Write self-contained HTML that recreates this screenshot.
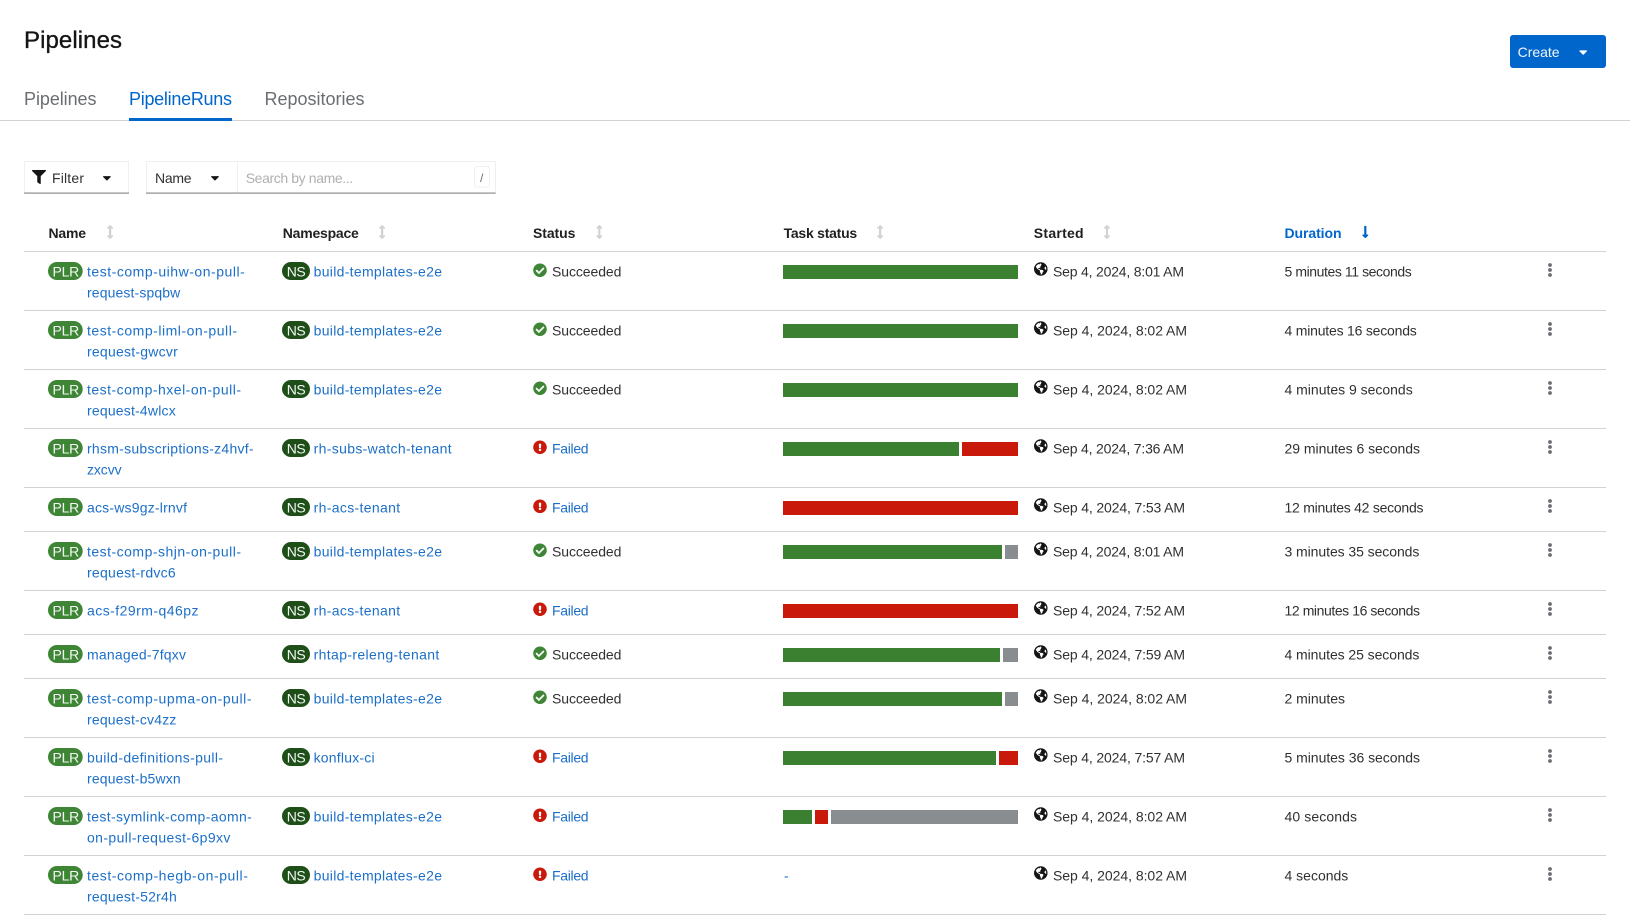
<!DOCTYPE html>
<html lang="en">
<head>
<meta charset="utf-8">
<title>Pipelines</title>
<style>
html,body{margin:0;padding:0;background:#fff;width:1630px;height:923px;overflow:hidden}
svg{display:block;font-family:"Liberation Sans",sans-serif;font-size:14px}
.d{fill:#303030}
.l{fill:#1c6fc9}
.h{font-weight:bold;fill:#1f1f1f}
.w{fill:#f4f8f4}
</style>
</head>
<body>
<svg xmlns="http://www.w3.org/2000/svg" width="1630" height="923" viewBox="0 0 1630 923">
<defs>
<symbol id="ok" viewBox="0 0 512 512"><path fill="#3e8635" d="M504 256c0 136.967-111.033 248-248 248S8 392.967 8 256 119.033 8 256 8s248 111.033 248 248zM227.314 387.314l184-184c6.248-6.248 6.248-16.379 0-22.627l-22.627-22.627c-6.248-6.249-16.379-6.249-22.628 0L216 308.118l-70.059-70.059c-6.248-6.248-16.379-6.248-22.628 0l-22.627 22.627c-6.248 6.248-6.248 16.379 0 22.627l104 104c6.249 6.249 16.379 6.249 22.628.001z"/></symbol>
<symbol id="err" viewBox="0 0 512 512"><path fill="#c9190b" d="M504 256c0 136.997-111.043 248-248 248S8 392.997 8 256C8 119.083 119.043 8 256 8s248 111.083 248 248zm-248 50c-25.405 0-46 20.595-46 46s20.595 46 46 46 46-20.595 46-46-20.595-46-46-46zm-43.673-165.346l7.418 136c.347 6.364 5.609 11.346 11.982 11.346h48.546c6.373 0 11.635-4.982 11.982-11.346l7.418-136c.375-6.874-5.098-12.654-11.982-12.654h-63.383c-6.884 0-12.356 5.78-11.981 12.654z"/></symbol>
<symbol id="globe" viewBox="0 0 496 512"><path fill="#151515" d="M248 8C111.03 8 0 119.03 0 256s111.03 248 248 248 248-111.03 248-248S384.97 8 248 8zm82.29 357.6c-3.9 3.88-7.99 7.95-11.31 11.28-2.99 3-5.1 6.7-6.17 10.71-1.51 5.66-2.73 11.38-4.77 16.87l-17.39 46.85c-13.76 3-28 4.69-42.65 4.69v-27.38c1.69-12.62-7.64-36.26-22.63-51.25-6-6-9.37-14.14-9.37-22.63v-32.01c0-11.64-6.27-22.34-16.46-27.97-14.37-7.95-34.81-19.06-48.81-26.11-11.48-5.78-22.1-13.14-31.65-21.75l-.8-.72a114.792 114.792 0 0 1-18.06-20.74c-9.38-13.77-24.66-36.42-34.59-51.14 20.47-45.5 57.36-82.04 103.2-101.89l24.01 12.01C203.48 89.74 216 82.01 216 70.11v-11.3c7.99-1.29 16.12-2.11 24.39-2.42l28.3 28.3c6.25 6.25 6.25 16.38 0 22.63L264 112l-10.34 10.34c-3.12 3.12-3.12 8.19 0 11.31l4.69 4.69c3.12 3.12 3.12 8.19 0 11.31l-8 8a8.008 8.008 0 0 1-5.66 2.34h-8.99c-2.08 0-4.08.81-5.58 2.27l-9.92 9.65a8.008 8.008 0 0 0-1.58 9.31l15.59 31.19c2.66 5.32-1.21 11.58-7.15 11.58h-5.64c-1.93 0-3.79-.7-5.24-1.96l-9.28-8.06a16.017 16.017 0 0 0-15.55-3.1l-31.17 10.39a11.95 11.95 0 0 0-8.17 11.34c0 4.53 2.56 8.66 6.61 10.69l11.08 5.54c9.41 4.71 19.79 7.16 30.31 7.16s22.59 27.29 32 32h66.75c8.49 0 16.62 3.37 22.63 9.37l13.69 13.69a30.503 30.503 0 0 1 8.93 21.57 46.536 46.536 0 0 1-13.72 32.98zM417 274.25c-5.79-1.45-10.84-5-14.15-9.97l-17.98-26.97a23.97 23.97 0 0 1 0-26.62l19.59-29.38c2.32-3.47 5.5-6.29 9.24-8.15l12.98-6.49C440.2 193.59 448 223.87 448 256c0 8.67-.74 17.16-1.82 25.54L417 274.25z"/></symbol>
<symbol id="sort" viewBox="0 0 256 512"><path fill="#d2d2d2" d="M214.059 377.941H168V134.059h46.059c21.382 0 32.09-25.851 16.971-40.971L144.971 7.029c-9.373-9.373-24.568-9.373-33.941 0L24.971 93.088c-15.119 15.119-4.411 40.971 16.971 40.971H88v243.882H41.941c-21.382 0-32.09 25.851-16.971 40.971l86.059 86.059c9.373 9.373 24.568 9.373 33.941 0l86.059-86.059c15.12-15.119 4.412-40.971-16.97-40.971z"/></symbol>
<symbol id="down" viewBox="0 0 256 512"><path fill="#0066cc" d="M168 345.941V44c0-6.627-5.373-12-12-12h-56c-6.627 0-12 5.373-12 12v301.941H41.941c-21.382 0-32.09 25.851-16.971 40.971l86.059 86.059c9.373 9.373 24.569 9.373 33.941 0l86.059-86.059c15.119-15.119 4.411-40.971-16.971-40.971H168z"/></symbol>
<symbol id="funnel" viewBox="0 0 512 512"><path fill="#151515" d="M487.976 0H24.028C2.71 0-8.047 25.866 7.058 40.971L192 225.941V432c0 7.831 3.821 15.17 10.237 19.662l80 55.98C298.02 518.69 320 507.493 320 487.98V225.941l184.947-184.97C520.021 25.896 509.338 0 487.976 0z"/></symbol>
<symbol id="caret" viewBox="0 0 320 180"><path d="M31.3 10h257.3c17.8 0 26.7 21.5 14.1 34.1L174.1 172.8c-7.8 7.8-20.5 7.8-28.3 0L17.2 44.1C4.6 31.5 13.5 10 31.3 10z"/></symbol>
<g id="kebab"><circle cx="1550" cy="14" r="1.9" fill="#6a6e73"/><circle cx="1550" cy="19" r="1.9" fill="#6a6e73"/><circle cx="1550" cy="24" r="1.9" fill="#6a6e73"/></g>
</defs>

<text x="24" y="48" font-size="24" fill="#151515" stroke="#151515" stroke-width=".35" textLength="98">Pipelines</text>
<rect x="1510" y="35" width="96" height="33" rx="3" fill="#0066cc"/>
<text x="1517.6" y="57" fill="#f2f6fb" textLength="42">Create</text>
<use href="#caret" x="1579" y="50" width="8.4" height="5" fill="#fff"/>

<text x="24" y="105" font-size="18" fill="#6a6e73" textLength="72.5">Pipelines</text>
<text x="129" y="105" font-size="18" fill="#0066cc" textLength="103">PipelineRuns</text>
<text x="264.5" y="105" font-size="18" fill="#6a6e73" textLength="100">Repositories</text>
<rect x="0" y="120" width="1630" height="1" fill="#d2d2d2"/>
<rect x="129" y="118" width="103" height="3" fill="#0066cc"/>

<rect x="24.5" y="161.5" width="104" height="31.5" fill="#fff" stroke="#f0f0f0"/>
<rect x="24" y="192.5" width="105" height="1.2" fill="#8a8d90"/>
<use href="#funnel" x="32" y="170" width="14" height="14"/>
<text x="52" y="183" class="d" textLength="32">Filter</text>
<use href="#caret" x="102.7" y="175.7" width="8.4" height="5" fill="#151515"/>

<rect x="146.5" y="161.5" width="349" height="31.5" fill="#fff" stroke="#f0f0f0"/>
<rect x="237" y="161.5" width="1" height="31" fill="#f0f0f0"/>
<rect x="146" y="192.5" width="349.6" height="1.2" fill="#8a8d90"/>
<text x="155" y="183" class="d" textLength="36.5">Name</text>
<use href="#caret" x="210.8" y="175.7" width="8.4" height="5" fill="#151515"/>
<text x="245.7" y="183" fill="#b0b0b0" textLength="107.5">Search by name...</text>
<rect x="474.5" y="166.5" width="15" height="20.5" rx="2.5" fill="#fff" stroke="#f0f0f0"/>
<text x="480" y="182" font-size="12" fill="#6a6e73">/</text>

<text x="48.5" y="238" class="h" textLength="37.5">Name</text>
<use href="#sort" x="106.6" y="225" width="7" height="14"/>
<text x="282.8" y="238" class="h" textLength="76">Namespace</text>
<use href="#sort" x="378.6" y="225" width="7" height="14"/>
<text x="533" y="238" class="h" textLength="42.4">Status</text>
<use href="#sort" x="595.8" y="225" width="7" height="14"/>
<text x="783.6" y="238" class="h" textLength="73.6">Task status</text>
<use href="#sort" x="876.6" y="225" width="7" height="14"/>
<text x="1033.8" y="238" class="h" textLength="49.8">Started</text>
<use href="#sort" x="1103.5" y="225" width="7" height="14"/>
<text x="1284.5" y="238" font-weight="bold" fill="#0066cc" textLength="57">Duration</text>
<use href="#down" x="1361.8" y="225" width="7" height="14"/>

<g fill="#d2d2d2">
<rect x="24" y="251" width="1582" height="1"/><rect x="24" y="310" width="1582" height="1"/><rect x="24" y="369" width="1582" height="1"/><rect x="24" y="428" width="1582" height="1"/><rect x="24" y="487" width="1582" height="1"/><rect x="24" y="531" width="1582" height="1"/><rect x="24" y="590" width="1582" height="1"/><rect x="24" y="634" width="1582" height="1"/><rect x="24" y="678" width="1582" height="1"/><rect x="24" y="737" width="1582" height="1"/><rect x="24" y="796" width="1582" height="1"/><rect x="24" y="855" width="1582" height="1"/><rect x="24" y="914" width="1582" height="1"/>
</g>

<!-- row 1 -->
<g transform="translate(0,251)">
<rect x="48" y="11" width="34.7" height="18" rx="9" fill="#3e8635"/><text x="52.5" y="25.3" class="w" textLength="26.8">PLR</text>
<text x="87" y="25.3" class="l" textLength="157.8">test-comp-uihw-on-pull-</text><text x="87" y="46.3" class="l" textLength="93.3">request-spqbw</text>
<rect x="282" y="11" width="28" height="18" rx="9" fill="#1e4f18"/><text x="286.7" y="25.3" class="w" textLength="19">NS</text>
<text x="313.6" y="25.3" class="l" textLength="128.4">build-templates-e2e</text>
<use href="#ok" x="533" y="12.3" width="14" height="14"/><text x="552" y="25.3" class="d" textLength="69.4">Succeeded</text>
<rect x="783" y="14" width="235" height="14" fill="#3a8030"/>
<use href="#globe" x="1034" y="11" width="13.6" height="14"/><text x="1053" y="25.3" class="d" textLength="131">Sep 4, 2024, 8:01 AM</text>
<text x="1284.5" y="25.3" class="d" textLength="127.2">5 minutes 11 seconds</text><use href="#kebab"/>
</g>
<!-- row 2 -->
<g transform="translate(0,310)">
<rect x="48" y="11" width="34.7" height="18" rx="9" fill="#3e8635"/><text x="52.5" y="25.3" class="w" textLength="26.8">PLR</text>
<text x="87" y="25.3" class="l" textLength="150">test-comp-liml-on-pull-</text><text x="87" y="46.3" class="l" textLength="90.8">request-gwcvr</text>
<rect x="282" y="11" width="28" height="18" rx="9" fill="#1e4f18"/><text x="286.7" y="25.3" class="w" textLength="19">NS</text>
<text x="313.6" y="25.3" class="l" textLength="128.4">build-templates-e2e</text>
<use href="#ok" x="533" y="12.3" width="14" height="14"/><text x="552" y="25.3" class="d" textLength="69.4">Succeeded</text>
<rect x="783" y="14" width="235" height="14" fill="#3a8030"/>
<use href="#globe" x="1034" y="11" width="13.6" height="14"/><text x="1053" y="25.3" class="d" textLength="134">Sep 4, 2024, 8:02 AM</text>
<text x="1284.5" y="25.3" class="d" textLength="132.3">4 minutes 16 seconds</text><use href="#kebab"/>
</g>
<!-- row 3 -->
<g transform="translate(0,369)">
<rect x="48" y="11" width="34.7" height="18" rx="9" fill="#3e8635"/><text x="52.5" y="25.3" class="w" textLength="26.8">PLR</text>
<text x="87" y="25.3" class="l" textLength="154">test-comp-hxel-on-pull-</text><text x="87" y="46.3" class="l" textLength="88.7">request-4wlcx</text>
<rect x="282" y="11" width="28" height="18" rx="9" fill="#1e4f18"/><text x="286.7" y="25.3" class="w" textLength="19">NS</text>
<text x="313.6" y="25.3" class="l" textLength="128.4">build-templates-e2e</text>
<use href="#ok" x="533" y="12.3" width="14" height="14"/><text x="552" y="25.3" class="d" textLength="69.4">Succeeded</text>
<rect x="783" y="14" width="235" height="14" fill="#3a8030"/>
<use href="#globe" x="1034" y="11" width="13.6" height="14"/><text x="1053" y="25.3" class="d" textLength="134">Sep 4, 2024, 8:02 AM</text>
<text x="1284.5" y="25.3" class="d" textLength="128.2">4 minutes 9 seconds</text><use href="#kebab"/>
</g>
<!-- row 4 -->
<g transform="translate(0,428)">
<rect x="48" y="11" width="34.7" height="18" rx="9" fill="#3e8635"/><text x="52.5" y="25.3" class="w" textLength="26.8">PLR</text>
<text x="87" y="25.3" class="l" textLength="166.6">rhsm-subscriptions-z4hvf-</text><text x="87" y="46.3" class="l" textLength="34.6">zxcvv</text>
<rect x="282" y="11" width="28" height="18" rx="9" fill="#1e4f18"/><text x="286.7" y="25.3" class="w" textLength="19">NS</text>
<text x="313.6" y="25.3" class="l" textLength="138">rh-subs-watch-tenant</text>
<use href="#err" x="533" y="12.3" width="14" height="14"/><text x="552" y="25.3" class="l" textLength="36.6">Failed</text>
<rect x="783" y="14" width="176" height="14" fill="#3a8030"/><rect x="962" y="14" width="56" height="14" fill="#c9190b"/>
<use href="#globe" x="1034" y="11" width="13.6" height="14"/><text x="1053" y="25.3" class="d" textLength="131">Sep 4, 2024, 7:36 AM</text>
<text x="1284.5" y="25.3" class="d" textLength="135.5">29 minutes 6 seconds</text><use href="#kebab"/>
</g>
<!-- row 5 -->
<g transform="translate(0,487)">
<rect x="48" y="11" width="34.7" height="18" rx="9" fill="#3e8635"/><text x="52.5" y="25.3" class="w" textLength="26.8">PLR</text>
<text x="87" y="25.3" class="l" textLength="100">acs-ws9gz-lrnvf</text>
<rect x="282" y="11" width="28" height="18" rx="9" fill="#1e4f18"/><text x="286.7" y="25.3" class="w" textLength="19">NS</text>
<text x="313.6" y="25.3" class="l" textLength="86.6">rh-acs-tenant</text>
<use href="#err" x="533" y="12.3" width="14" height="14"/><text x="552" y="25.3" class="l" textLength="36.6">Failed</text>
<rect x="783" y="14" width="235" height="14" fill="#c9190b"/>
<use href="#globe" x="1034" y="11" width="13.6" height="14"/><text x="1053" y="25.3" class="d" textLength="132">Sep 4, 2024, 7:53 AM</text>
<text x="1284.5" y="25.3" class="d" textLength="139">12 minutes 42 seconds</text><use href="#kebab"/>
</g>
<!-- row 6 -->
<g transform="translate(0,531)">
<rect x="48" y="11" width="34.7" height="18" rx="9" fill="#3e8635"/><text x="52.5" y="25.3" class="w" textLength="26.8">PLR</text>
<text x="87" y="25.3" class="l" textLength="154">test-comp-shjn-on-pull-</text><text x="87" y="46.3" class="l" textLength="88.7">request-rdvc6</text>
<rect x="282" y="11" width="28" height="18" rx="9" fill="#1e4f18"/><text x="286.7" y="25.3" class="w" textLength="19">NS</text>
<text x="313.6" y="25.3" class="l" textLength="128.4">build-templates-e2e</text>
<use href="#ok" x="533" y="12.3" width="14" height="14"/><text x="552" y="25.3" class="d" textLength="69.4">Succeeded</text>
<rect x="783" y="14" width="219" height="14" fill="#3a8030"/><rect x="1005" y="14" width="13" height="14" fill="#8a8d90"/>
<use href="#globe" x="1034" y="11" width="13.6" height="14"/><text x="1053" y="25.3" class="d" textLength="131">Sep 4, 2024, 8:01 AM</text>
<text x="1284.5" y="25.3" class="d" textLength="134.9">3 minutes 35 seconds</text><use href="#kebab"/>
</g>
<!-- row 7 -->
<g transform="translate(0,590)">
<rect x="48" y="11" width="34.7" height="18" rx="9" fill="#3e8635"/><text x="52.5" y="25.3" class="w" textLength="26.8">PLR</text>
<text x="87" y="25.3" class="l" textLength="111.5">acs-f29rm-q46pz</text>
<rect x="282" y="11" width="28" height="18" rx="9" fill="#1e4f18"/><text x="286.7" y="25.3" class="w" textLength="19">NS</text>
<text x="313.6" y="25.3" class="l" textLength="86.6">rh-acs-tenant</text>
<use href="#err" x="533" y="12.3" width="14" height="14"/><text x="552" y="25.3" class="l" textLength="36.6">Failed</text>
<rect x="783" y="14" width="235" height="14" fill="#c9190b"/>
<use href="#globe" x="1034" y="11" width="13.6" height="14"/><text x="1053" y="25.3" class="d" textLength="132">Sep 4, 2024, 7:52 AM</text>
<text x="1284.5" y="25.3" class="d" textLength="135.5">12 minutes 16 seconds</text><use href="#kebab"/>
</g>
<!-- row 8 -->
<g transform="translate(0,634)">
<rect x="48" y="11" width="34.7" height="18" rx="9" fill="#3e8635"/><text x="52.5" y="25.3" class="w" textLength="26.8">PLR</text>
<text x="87" y="25.3" class="l" textLength="99">managed-7fqxv</text>
<rect x="282" y="11" width="28" height="18" rx="9" fill="#1e4f18"/><text x="286.7" y="25.3" class="w" textLength="19">NS</text>
<text x="313.6" y="25.3" class="l" textLength="125.7">rhtap-releng-tenant</text>
<use href="#ok" x="533" y="12.3" width="14" height="14"/><text x="552" y="25.3" class="d" textLength="69.4">Succeeded</text>
<rect x="783" y="14" width="217" height="14" fill="#3a8030"/><rect x="1003" y="14" width="15" height="14" fill="#8a8d90"/>
<use href="#globe" x="1034" y="11" width="13.6" height="14"/><text x="1053" y="25.3" class="d" textLength="132">Sep 4, 2024, 7:59 AM</text>
<text x="1284.5" y="25.3" class="d" textLength="134.9">4 minutes 25 seconds</text><use href="#kebab"/>
</g>
<!-- row 9 -->
<g transform="translate(0,678)">
<rect x="48" y="11" width="34.7" height="18" rx="9" fill="#3e8635"/><text x="52.5" y="25.3" class="w" textLength="26.8">PLR</text>
<text x="87" y="25.3" class="l" textLength="164.5">test-comp-upma-on-pull-</text><text x="87" y="46.3" class="l" textLength="89.4">request-cv4zz</text>
<rect x="282" y="11" width="28" height="18" rx="9" fill="#1e4f18"/><text x="286.7" y="25.3" class="w" textLength="19">NS</text>
<text x="313.6" y="25.3" class="l" textLength="128.4">build-templates-e2e</text>
<use href="#ok" x="533" y="12.3" width="14" height="14"/><text x="552" y="25.3" class="d" textLength="69.4">Succeeded</text>
<rect x="783" y="14" width="219" height="14" fill="#3a8030"/><rect x="1005" y="14" width="13" height="14" fill="#8a8d90"/>
<use href="#globe" x="1034" y="11" width="13.6" height="14"/><text x="1053" y="25.3" class="d" textLength="134">Sep 4, 2024, 8:02 AM</text>
<text x="1284.5" y="25.3" class="d" textLength="60.5">2 minutes</text><use href="#kebab"/>
</g>
<!-- row 10 -->
<g transform="translate(0,737)">
<rect x="48" y="11" width="34.7" height="18" rx="9" fill="#3e8635"/><text x="52.5" y="25.3" class="w" textLength="26.8">PLR</text>
<text x="87" y="25.3" class="l" textLength="136">build-definitions-pull-</text><text x="87" y="46.3" class="l" textLength="93.7">request-b5wxn</text>
<rect x="282" y="11" width="28" height="18" rx="9" fill="#1e4f18"/><text x="286.7" y="25.3" class="w" textLength="19">NS</text>
<text x="313.6" y="25.3" class="l" textLength="61">konflux-ci</text>
<use href="#err" x="533" y="12.3" width="14" height="14"/><text x="552" y="25.3" class="l" textLength="36.6">Failed</text>
<rect x="783" y="14" width="213" height="14" fill="#3a8030"/><rect x="999" y="14" width="19" height="14" fill="#c9190b"/>
<use href="#globe" x="1034" y="11" width="13.6" height="14"/><text x="1053" y="25.3" class="d" textLength="132">Sep 4, 2024, 7:57 AM</text>
<text x="1284.5" y="25.3" class="d" textLength="135.5">5 minutes 36 seconds</text><use href="#kebab"/>
</g>
<!-- row 11 -->
<g transform="translate(0,796)">
<rect x="48" y="11" width="34.7" height="18" rx="9" fill="#3e8635"/><text x="52.5" y="25.3" class="w" textLength="26.8">PLR</text>
<text x="87" y="25.3" class="l" textLength="164.8">test-symlink-comp-aomn-</text><text x="87" y="46.3" class="l" textLength="143.4">on-pull-request-6p9xv</text>
<rect x="282" y="11" width="28" height="18" rx="9" fill="#1e4f18"/><text x="286.7" y="25.3" class="w" textLength="19">NS</text>
<text x="313.6" y="25.3" class="l" textLength="128.4">build-templates-e2e</text>
<use href="#err" x="533" y="12.3" width="14" height="14"/><text x="552" y="25.3" class="l" textLength="36.6">Failed</text>
<rect x="783" y="14" width="29" height="14" fill="#3a8030"/><rect x="815" y="14" width="13" height="14" fill="#c9190b"/><rect x="831" y="14" width="187" height="14" fill="#8a8d90"/>
<use href="#globe" x="1034" y="11" width="13.6" height="14"/><text x="1053" y="25.3" class="d" textLength="134">Sep 4, 2024, 8:02 AM</text>
<text x="1284.5" y="25.3" class="d" textLength="72.5">40 seconds</text><use href="#kebab"/>
</g>
<!-- row 12 -->
<g transform="translate(0,855)">
<rect x="48" y="11" width="34.7" height="18" rx="9" fill="#3e8635"/><text x="52.5" y="25.3" class="w" textLength="26.8">PLR</text>
<text x="87" y="25.3" class="l" textLength="160.9">test-comp-hegb-on-pull-</text><text x="87" y="46.3" class="l" textLength="89.8">request-52r4h</text>
<rect x="282" y="11" width="28" height="18" rx="9" fill="#1e4f18"/><text x="286.7" y="25.3" class="w" textLength="19">NS</text>
<text x="313.6" y="25.3" class="l" textLength="128.4">build-templates-e2e</text>
<use href="#err" x="533" y="12.3" width="14" height="14"/><text x="552" y="25.3" class="l" textLength="36.6">Failed</text>
<text x="784" y="25.3" class="l">-</text>
<use href="#globe" x="1034" y="11" width="13.6" height="14"/><text x="1053" y="25.3" class="d" textLength="134">Sep 4, 2024, 8:02 AM</text>
<text x="1284.5" y="25.3" class="d" textLength="63.8">4 seconds</text><use href="#kebab"/>
</g>
</svg>
</body>
</html>
